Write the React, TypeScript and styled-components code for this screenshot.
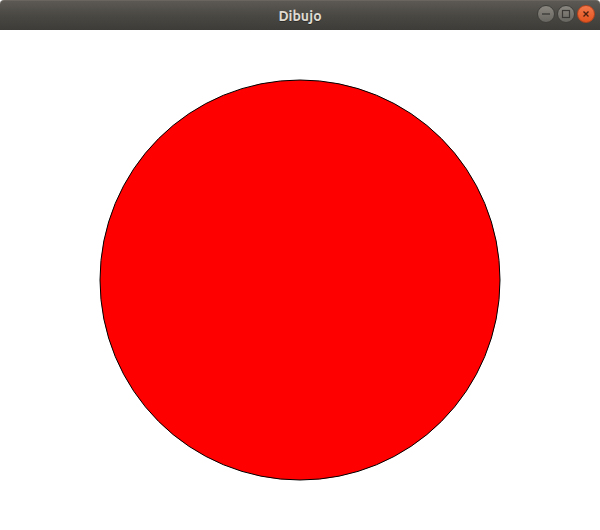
import { FC } from 'react'
import styled, { createGlobalStyle } from 'styled-components'

const GlobalStyle = createGlobalStyle`
  html, body {
    margin: 0;
    padding: 0;
    background: #ffffff;
  }
`

interface ButtonProps {
  readonly close?: boolean
}

const Window = styled.div`
  display: flex;
  flex-direction: column;
  height: 530px;
  width: 600px;
  background: #ffffff;
  overflow: hidden;
`

const TitleBar = styled.div`
  position: relative;
  display: flex;
  align-items: center;
  justify-content: center;
  height: 30px;
  flex-shrink: 0;
  background: linear-gradient(#5c5954 0%, #4a4843 50%, #3d3c38 100%);
  border-top: 1px solid #6a665f;
  box-sizing: border-box;
  border-radius: 4px 4px 0 0;
`

const Title = styled.span`
  color: #dfdbd2;
  font-family: Ubuntu, 'DejaVu Sans', 'Noto Sans', sans-serif;
  font-size: 14px;
  font-weight: bold;
  text-shadow: 0 1px 0 #2c2b28;
`

const Controls = styled.div`
  position: absolute;
  right: 5px;
  top: 4px;
  display: flex;
  gap: 2px;
`

const WinButton = styled.div<ButtonProps>`
  display: flex;
  align-items: center;
  justify-content: center;
  width: 18px;
  height: 18px;
  border-radius: 50%;
  box-sizing: border-box;
  border: 1px solid ${(props) => (props.close ? '#b5431d' : '#3f3e3a')};
  background: ${(props) =>
    props.close
      ? 'linear-gradient(#f2784b, #e3541e)'
      : 'linear-gradient(#8a8780, #67655f)'};
`

const Canvas = styled.div`
  flex: 1;
  display: flex;
  justify-content: center;
  padding-top: 49px;
`

const App: FC = () => (
  <>
    <GlobalStyle />
    <Window>
      <TitleBar>
        <Title>Dibujo</Title>
        <Controls>
          <WinButton>
            <svg width="10" height="10" viewBox="0 0 10 10">
              <line x1="1" y1="5" x2="9" y2="5" stroke="#3a3935" strokeWidth="1.3" />
            </svg>
          </WinButton>
          <WinButton>
            <svg width="10" height="10" viewBox="0 0 10 10">
              <rect x="1.5" y="1.5" width="7" height="7" fill="none" stroke="#3a3935" strokeWidth="1.2" />
            </svg>
          </WinButton>
          <WinButton close>
            <svg width="10" height="10" viewBox="0 0 10 10">
              <path d="M2.5 2.5 L7.5 7.5 M7.5 2.5 L2.5 7.5" stroke="#4a2010" strokeWidth="1.4" />
            </svg>
          </WinButton>
        </Controls>
      </TitleBar>
      <Canvas>
        <svg width="402" height="402" viewBox="-1 -1 402 402">
          <circle cx="200" cy="200" r="200" fill="#ff0000" stroke="#000000" strokeWidth="1" />
        </svg>
      </Canvas>
    </Window>
  </>
)

export default App
